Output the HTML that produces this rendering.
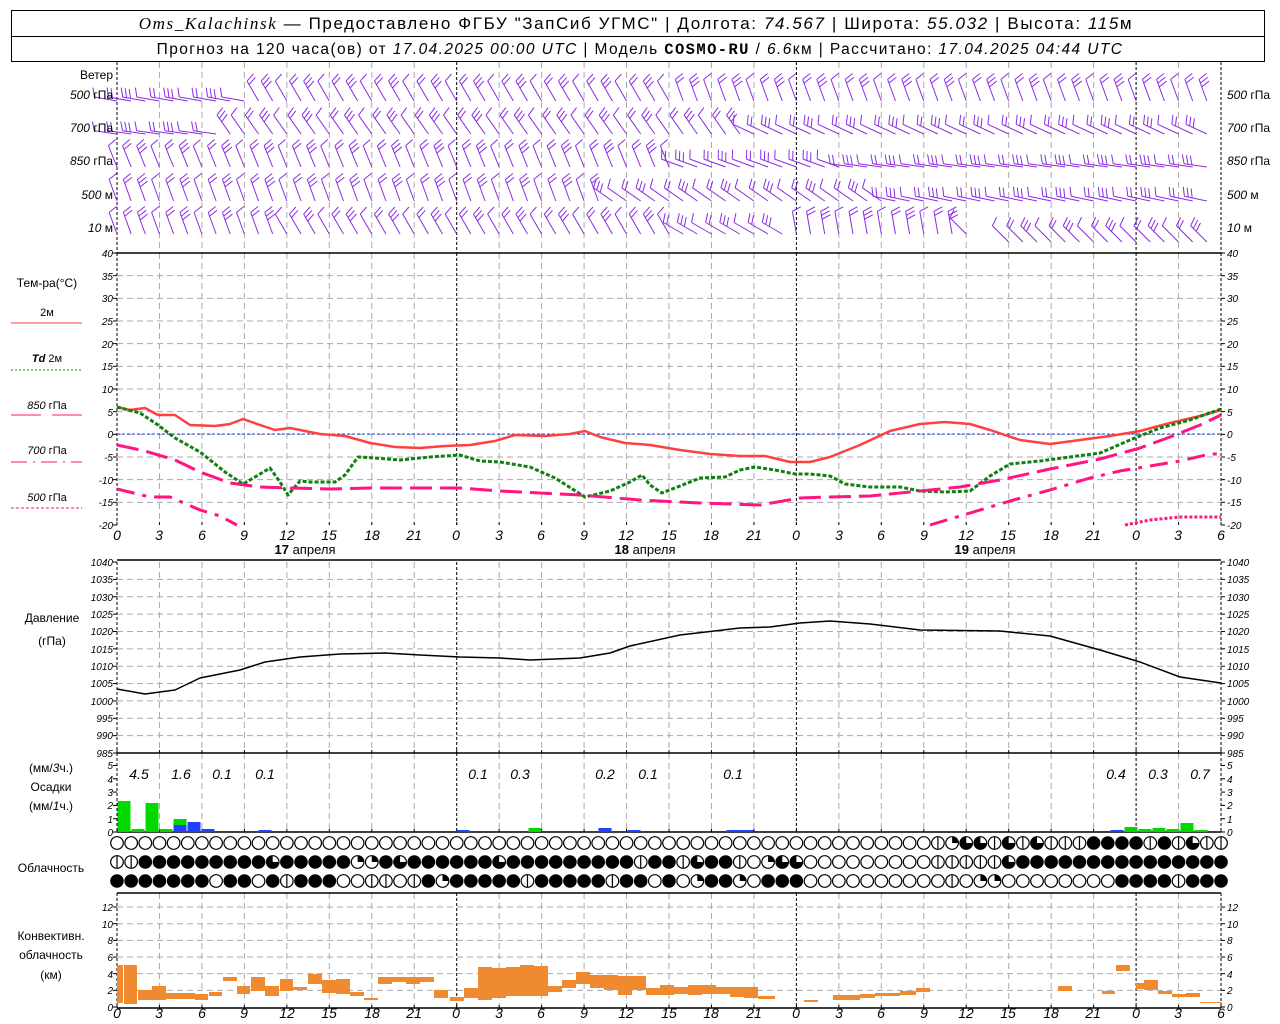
<!DOCTYPE html>
<html><head><meta charset="utf-8"><style>
html,body{margin:0;padding:0;background:#fff;width:1280px;height:1024px;overflow:hidden}
svg{display:block}
text{font-family:"Liberation Sans","DejaVu Sans",sans-serif;fill:#000}
.t{font-size:10px;font-style:italic}
.h{font-size:14px;font-style:italic}
.lb{font-size:12px}
</style></head><body>
<svg id="s" width="1280" height="1024" xmlns="http://www.w3.org/2000/svg">
<rect x="11.5" y="10.5" width="1253" height="51" fill="none" stroke="#000"/>
<line x1="11" y1="36.5" x2="1265" y2="36.5" stroke="#000"/>
<text x="636" y="29" text-anchor="middle" font-size="17" letter-spacing="1.6"><tspan font-style="italic" font-family="Liberation Serif">Oms_Kalachinsk</tspan> — Предоставлено ФГБУ "ЗапСиб УГМС" | Долгота: <tspan font-style="italic">74.567</tspan> | Широта: <tspan font-style="italic">55.032</tspan> | Высота: <tspan font-style="italic">115</tspan>м</text>
<text x="640" y="54" text-anchor="middle" font-size="15.5" letter-spacing="1.4">Прогноз на 120 часа(ов) от <tspan font-style="italic">17.04.2025 00:00 UTC</tspan> | Модель <tspan font-weight="bold" font-family="Liberation Mono">COSMO-RU</tspan> / <tspan font-style="italic">6.6</tspan>км | Рассчитано: <tspan font-style="italic">17.04.2025 04:44 UTC</tspan></text>
<g id="grid"></g>
<g id="data"></g>
<g class="lb">
<text x="113" y="79" text-anchor="end">Ветер</text>
<text x="113" y="99" text-anchor="end"><tspan font-style="italic">500</tspan> гПа</text>
<text x="113" y="132" text-anchor="end"><tspan font-style="italic">700</tspan> гПа</text>
<text x="113" y="165" text-anchor="end"><tspan font-style="italic">850</tspan> гПа</text>
<text x="113" y="199" text-anchor="end"><tspan font-style="italic">500</tspan> м</text>
<text x="113" y="232" text-anchor="end"><tspan font-style="italic">10</tspan>  м</text>
<text x="1227" y="99"><tspan font-style="italic">500</tspan> гПа</text>
<text x="1227" y="132"><tspan font-style="italic">700</tspan> гПа</text>
<text x="1227" y="165"><tspan font-style="italic">850</tspan> гПа</text>
<text x="1227" y="199"><tspan font-style="italic">500</tspan> м</text>
<text x="1227" y="232"><tspan font-style="italic">10</tspan>  м</text>
<text x="47" y="287" text-anchor="middle">Тем-ра(°C)</text>
<text x="47" y="316" text-anchor="middle" font-size="11">2м</text>
<text x="47" y="362" text-anchor="middle" font-size="11"><tspan font-style="italic" font-weight="bold">Td</tspan>  2м</text>
<text x="47" y="409" text-anchor="middle" font-size="11"><tspan font-style="italic">850</tspan> гПа</text>
<text x="47" y="454" text-anchor="middle" font-size="11"><tspan font-style="italic">700</tspan> гПа</text>
<text x="47" y="501" text-anchor="middle" font-size="11"><tspan font-style="italic">500</tspan> гПа</text>
<text x="52" y="622" text-anchor="middle">Давление</text>
<text x="52" y="645" text-anchor="middle">(гПа)</text>
<text x="51" y="772" text-anchor="middle">(мм/<tspan font-style="italic">3</tspan>ч.)</text>
<text x="51" y="791" text-anchor="middle">Осадки</text>
<text x="51" y="810" text-anchor="middle">(мм/<tspan font-style="italic">1</tspan>ч.)</text>
<text x="51" y="872" text-anchor="middle">Облачность</text>
<text x="51" y="940" text-anchor="middle">Конвективн.</text>
<text x="51" y="959" text-anchor="middle">облачность</text>
<text x="51" y="979" text-anchor="middle">(км)</text>
</g>
<line x1="11" y1="323" x2="82" y2="323" stroke="#ff4040"/>
<line x1="11" y1="370" x2="82" y2="370" stroke="#108010" stroke-dasharray="2,2"/>
<line x1="11" y1="415" x2="41" y2="415" stroke="#ff1480"/><line x1="52" y1="415" x2="82" y2="415" stroke="#ff1480"/>
<line x1="11" y1="462" x2="82" y2="462" stroke="#ff1480" stroke-dasharray="16,6,2,6"/>
<line x1="11" y1="508" x2="82" y2="508" stroke="#ff1480" stroke-dasharray="3,2"/>
<g class="t" text-anchor="end">
<text x="113" y="257">40</text><text x="113" y="280">35</text><text x="113" y="302">30</text><text x="113" y="325">25</text><text x="113" y="348">20</text><text x="113" y="370">15</text><text x="113" y="393">10</text><text x="113" y="416">5</text><text x="113" y="438">0</text><text x="113" y="461">-5</text><text x="113" y="484">-10</text><text x="113" y="506">-15</text><text x="113" y="529">-20</text>
<text x="113" y="566">1040</text><text x="113" y="583">1035</text><text x="113" y="601">1030</text><text x="113" y="618">1025</text><text x="113" y="635">1020</text><text x="113" y="653">1015</text><text x="113" y="670">1010</text><text x="113" y="687">1005</text><text x="113" y="705">1000</text><text x="113" y="722">995</text><text x="113" y="739">990</text><text x="113" y="757">985</text>
<text x="113" y="769">5</text><text x="113" y="783">4</text><text x="113" y="796">3</text><text x="113" y="809">2</text><text x="113" y="823">1</text><text x="113" y="836">0</text>
<text x="113" y="911">12</text><text x="113" y="928">10</text><text x="113" y="944">8</text><text x="113" y="961">6</text><text x="113" y="978">4</text><text x="113" y="994">2</text><text x="113" y="1011">0</text>
</g>
<g class="t">
<text x="1227" y="257">40</text><text x="1227" y="280">35</text><text x="1227" y="302">30</text><text x="1227" y="325">25</text><text x="1227" y="348">20</text><text x="1227" y="370">15</text><text x="1227" y="393">10</text><text x="1227" y="416">5</text><text x="1227" y="438">0</text><text x="1227" y="461">-5</text><text x="1227" y="484">-10</text><text x="1227" y="506">-15</text><text x="1227" y="529">-20</text>
<text x="1227" y="566">1040</text><text x="1227" y="583">1035</text><text x="1227" y="601">1030</text><text x="1227" y="618">1025</text><text x="1227" y="635">1020</text><text x="1227" y="653">1015</text><text x="1227" y="670">1010</text><text x="1227" y="687">1005</text><text x="1227" y="705">1000</text><text x="1227" y="722">995</text><text x="1227" y="739">990</text><text x="1227" y="757">985</text>
<text x="1227" y="769">5</text><text x="1227" y="783">4</text><text x="1227" y="796">3</text><text x="1227" y="809">2</text><text x="1227" y="823">1</text><text x="1227" y="836">0</text>
<text x="1227" y="911">12</text><text x="1227" y="928">10</text><text x="1227" y="944">8</text><text x="1227" y="961">6</text><text x="1227" y="978">4</text><text x="1227" y="994">2</text><text x="1227" y="1011">0</text>
</g>
<g class="h" text-anchor="middle">
<text x="117" y="540">0</text><text x="159" y="540">3</text><text x="202" y="540">6</text><text x="244" y="540">9</text><text x="287" y="540">12</text><text x="329" y="540">15</text><text x="372" y="540">18</text><text x="414" y="540">21</text><text x="456" y="540">0</text><text x="499" y="540">3</text><text x="541" y="540">6</text><text x="584" y="540">9</text><text x="626" y="540">12</text><text x="669" y="540">15</text><text x="711" y="540">18</text><text x="754" y="540">21</text><text x="796" y="540">0</text><text x="839" y="540">3</text><text x="881" y="540">6</text><text x="924" y="540">9</text><text x="966" y="540">12</text><text x="1008" y="540">15</text><text x="1051" y="540">18</text><text x="1093" y="540">21</text><text x="1136" y="540">0</text><text x="1178" y="540">3</text><text x="1221" y="540">6</text>
<text x="117" y="1018">0</text><text x="159" y="1018">3</text><text x="202" y="1018">6</text><text x="244" y="1018">9</text><text x="287" y="1018">12</text><text x="329" y="1018">15</text><text x="372" y="1018">18</text><text x="414" y="1018">21</text><text x="456" y="1018">0</text><text x="499" y="1018">3</text><text x="541" y="1018">6</text><text x="584" y="1018">9</text><text x="626" y="1018">12</text><text x="669" y="1018">15</text><text x="711" y="1018">18</text><text x="754" y="1018">21</text><text x="796" y="1018">0</text><text x="839" y="1018">3</text><text x="881" y="1018">6</text><text x="924" y="1018">9</text><text x="966" y="1018">12</text><text x="1008" y="1018">15</text><text x="1051" y="1018">18</text><text x="1093" y="1018">21</text><text x="1136" y="1018">0</text><text x="1178" y="1018">3</text><text x="1221" y="1018">6</text>
</g>
<g font-size="13" text-anchor="middle">
<text x="305" y="554"><tspan font-weight="bold">17</tspan> апреля</text>
<text x="645" y="554"><tspan font-weight="bold">18</tspan> апреля</text>
<text x="985" y="554"><tspan font-weight="bold">19</tspan> апреля</text>
</g>
<g class="h" font-size="13" text-anchor="middle">
<text x="139" y="779">4.5</text><text x="181" y="779">1.6</text><text x="222" y="779">0.1</text><text x="265" y="779">0.1</text><text x="478" y="779">0.1</text><text x="520" y="779">0.3</text><text x="605" y="779">0.2</text><text x="648" y="779">0.1</text><text x="733" y="779">0.1</text><text x="1116" y="779">0.4</text><text x="1158" y="779">0.3</text><text x="1200" y="779">0.7</text>
</g>
</svg>
<script>
(function(){
var NS="http://www.w3.org/2000/svg",G=document.getElementById('grid'),D=document.getElementById('data');
var X0=117,PX=14.154;
function el(p,n,a){var e=document.createElementNS(NS,n);for(var k in a)e.setAttribute(k,a[k]);p.appendChild(e);return e;}
function ln(p,x1,y1,x2,y2,st,w,da){var a={x1:x1,y1:y1,x2:x2,y2:y2,stroke:st,'stroke-width':w||1};if(da)a['stroke-dasharray']=da;return el(p,'line',a);}
var panels=[[62,253],[253,525],[562,753],[753,832],[893,1008]];
for(var k=0;k<=26;k++){var x=X0+k*3*PX;var day=(k%8==0);
 panels.forEach(function(p){ if(k==0||k==26||day) ln(G,x,p[0],x,p[1],'#000',1,'3,2'); else ln(G,x,p[0],x,p[1],'#aaa',1,'6,4');});
 panels.forEach(function(p,i){ if(i>0){ln(G,x,p[1],x,p[1]-3,'#000',1);} });
}
for(var v=35;v>=-15;v-=5){var y=253+(40-v)*4.533;ln(G,X0,y,1221,y,'#aaa',1,'6,4');}
for(var v=1035;v>985;v-=5){var y=562+(1040-v)*3.473;ln(G,X0,y,1221,y,'#aaa',1,'6,4');}
for(var v=2;v<=12;v+=2){var y=1007-v*8.33;ln(G,X0,y,1221,y,'#aaa',1,'6,4');}
function ticks(vals,f){vals.forEach(function(v){var y=f(v);ln(G,113,y,117,y,'#000');ln(G,1221,y,1225,y,'#000');});}
var a=[];for(v=-20;v<=40;v+=5)a.push(v);ticks(a,function(v){return 253+(40-v)*4.533});
a=[];for(v=985;v<=1040;v+=5)a.push(v);ticks(a,function(v){return 562+(1040-v)*3.473});
ticks([0,1,2,3,4,5],function(v){return 832-v*13.3});
ticks([0,2,4,6,8,10,12],function(v){return 1007-v*8.33});
[253,560,753,832,893,1008].forEach(function(y){ln(G,X0,y,1221,y,'#000',1.5);});
ln(G,X0,434,1221,434,'#2040ff',1,'3,2');
var rows=[95,128,161,195,228],col='#8a2be2';
function ang(r,i){
 if(r==0)return i<10?190:(i<40?240:250);
 if(r==1)return i<8?188:(i<45?235:205);
 if(r==2)return i<40?248:(i<52?200:188);
 if(r==3)return i<35?250:(i<55?215:192);
 return i<12?250:(i<40?240:(i<48?210:(i<60?260:225)));
}
for(var r=0;r<5;r++)for(var i=0;i<78;i++){
 if(r==4&&i>=61&&i<63)continue;
 var x=X0+i*PX,y=rows[r]+(r==4&&i>60?14:6),A=ang(r,i)*Math.PI/180,L=23;
 var dx=Math.cos(A),dy=Math.sin(A),tx=x+dx*L,ty=y+dy*L;
 ln(D,x,y,tx,ty,col,1);
 var n=(i*7+r*3)%3+1;
 var px=-dy,py=dx; if(py>0){px=-px;py=-py;}
 for(var b=0;b<n;b++){var bx=tx-dx*b*4,by=ty-dy*b*4;ln(D,bx,by,bx+px*9+dx*3,by+py*9+dy*3,col,1);}
}
function pl(pts,st,w,da){var d='';pts.forEach(function(p,j){d+=(j?'L':'M')+p[0]+' '+p[1];});var a={d:d,fill:'none',stroke:st,'stroke-width':w,'stroke-linejoin':'round'};if(da)a['stroke-dasharray']=da;el(D,'path',a);}
pl([[117,407],[130,410],[145,408],[158,415],[175,415],[190,425],[215,426],[230,424],[243,419],[260,425],[275,430],[290,428],[320,434],[345,436],[370,443],[395,447],[420,448],[445,446],[470,445],[495,441],[515,435],[545,436],[570,434],[585,431],[600,437],[625,443],[650,445],[680,450],[710,454],[740,456],[765,456],[790,462],[810,462],[830,457],[860,445],[890,431],[920,424],[945,422],[970,424],[990,430],[1020,440],[1050,444],[1080,440],[1110,436],[1140,431],[1170,423],[1200,416],[1221,410]],'#ff4040',2.5);
pl([[117,407],[140,413],[158,425],[175,438],[200,452],[225,472],[243,484],[255,477],[270,468],[280,482],[288,495],[300,481],[310,482],[335,482],[345,475],[358,457],[375,458],[400,460],[430,457],[460,455],[480,461],[500,462],[530,467],[555,478],[585,497],[610,491],[630,482],[642,475],[650,485],[662,493],[680,486],[700,478],[725,477],[740,470],[755,467],[775,470],[795,474],[810,474],[830,476],[845,484],[870,487],[900,487],[920,491],[945,492],[970,491],[990,476],[1010,464],[1040,461],[1070,457],[1100,453],[1130,440],[1160,428],[1190,420],[1221,409]],'#108010',3,'4,2');
pl([[117,445],[145,451],[175,460],[200,472],[230,483],[260,487],[290,488],[330,489],[370,488],[420,488],[460,488],[500,491],[540,493],[580,495],[640,500],[700,503],[760,505],[800,498],[830,497],[870,496],[920,491],[960,487],[1000,480],[1050,469],[1100,459],[1140,448],[1170,437],[1200,425],[1221,415]],'#ff1480',3,'22,8');
pl([[117,489],[150,497],[170,497],[200,510],[220,516],[237,525]],'#ff1480',3,'18,8,4,8');
pl([[930,525],[970,513],[1010,501],[1050,490],[1090,478],[1120,471],[1150,466],[1180,461],[1210,454],[1221,454]],'#ff1480',3,'18,8,4,8');
pl([[1125,525],[1150,520],[1180,517],[1221,517]],'#ff1480',3,'3,2');
pl([[117,689],[145,694],[175,690],[200,678],[240,670],[265,662],[300,657],[340,654],[385,653],[420,655],[460,657],[500,658],[530,660],[580,658],[610,653],[630,646],[680,635],[740,628],[770,627],[800,623],[830,621],[870,624],[920,630],[1000,631],[1050,636],[1100,650],[1140,662],[1180,677],[1221,683]],'#000',1.5);
var G1='#00d800',B1='#2040ff';
[[117,131,801,G1],[131,145,829,G1],[145,159,803,G1],[159,173,829,G1],[173,187,819,G1],[173,187,825,B1],[187,201,822,B1],[201,215,829,B1],[258,272,830,B1],[456,470,830,B1],[528,542,828,G1],[598,612,828,B1],[627,641,830,B1],[726,754,830,B1],[1110,1124,830,B1],[1124,1138,827,G1],[1138,1152,829,G1],[1152,1166,828,G1],[1166,1180,829,G1],[1180,1194,823,G1],[1194,1208,830,G1]].forEach(function(b){el(D,'rect',{x:b[0]+0.5,y:b[2],width:b[1]-b[0]-1,height:832-b[2],fill:b[3]});});
[[117,123,965,1003],[124,137,965,1004],[138,160,990,1000],[152,166,986,1000],[166,180,993,999],[180,195,993,999],[195,208,994,1000],[209,222,992,996],[223,237,977,981],[237,250,986,994],[251,265,977,991],[265,279,986,996],[280,293,979,991],[293,307,987,990],[308,322,974,984],[322,336,980,993],[336,350,979,994],[350,364,992,996],[364,378,998,1000],[378,392,977,984],[392,406,977,982],[406,420,977,984],[420,434,977,982],[434,448,990,998],[450,464,997,1001],[464,478,988,998],[478,492,967,1000],[492,506,968,998],[506,520,967,996],[520,534,965,996],[534,548,966,996],[548,562,986,992],[562,576,980,988],[576,590,972,984],[590,604,975,988],[604,618,975,990],[618,632,976,995],[632,646,976,990],[646,660,988,995],[660,674,985,995],[674,688,987,994],[688,702,985,995],[702,716,985,994],[716,730,987,994],[730,744,987,997],[744,758,987,998],[758,775,996,999],[804,818,1000,1002],[833,860,995,1000],[860,875,994,998],[875,900,993,996],[900,916,991,995],[916,930,988,992],[1058,1072,986,991],[1102,1115,991,994],[1116,1130,965,971],[1136,1150,983,989],[1144,1158,980,990],[1158,1172,991,994],[1172,1186,994,997],[1186,1200,993,997],[1200,1221,1002,1003]].forEach(function(b){el(D,'rect',{x:b[0],y:b[2],width:b[1]-b[0],height:b[3]-b[2],fill:'#f08a30'});});
var R=[
 'o'.repeat(58)+'hqtthththhhxxxxhxhthh',
 'hhxxxxxxxxxtxxxxxqq'+'xtxxxxxxtxxxxxxxxxhxxhtxxhoqttooooooo'+'oo'+'hhhhhtxxxxxxxxxxxxxxx',
 'xxxxxxxoxxoxhxxxooh'+'hohxqxxxxxhxxxxxhxxoxoqxxqoxxxooooooo'+'ooohoqqooooooooxxxxhxxxxx'
];
var CY=[843,862,881];
for(var r=0;r<3;r++){var s=R[r];for(var i=0;i<79;i++){var c=s[i]||'x',cx=X0+i*PX,cy=CY[r],rr=6.3;
 if(c=='x'){el(D,'circle',{cx:cx,cy:cy,r:rr+0.5,fill:'#000'});continue;}
 el(D,'circle',{cx:cx,cy:cy,r:rr,fill:'#fff',stroke:'#000','stroke-width':1.2});
 if(c=='h'){ln(D,cx,cy-rr,cx,cy+rr,'#000',1.2);}
 if(c=='q'){el(D,'path',{d:'M'+cx+' '+cy+'L'+cx+' '+(cy-rr)+'A'+rr+' '+rr+' 0 0 1 '+(cx+rr)+' '+cy+'Z',fill:'#000'});}
 if(c=='t'){el(D,'path',{d:'M'+cx+' '+cy+'L'+(cx+rr)+' '+cy+'A'+rr+' '+rr+' 0 1 1 '+cx+' '+(cy-rr)+'Z',fill:'#000'});}
}}
})();
</script>
</body></html>
